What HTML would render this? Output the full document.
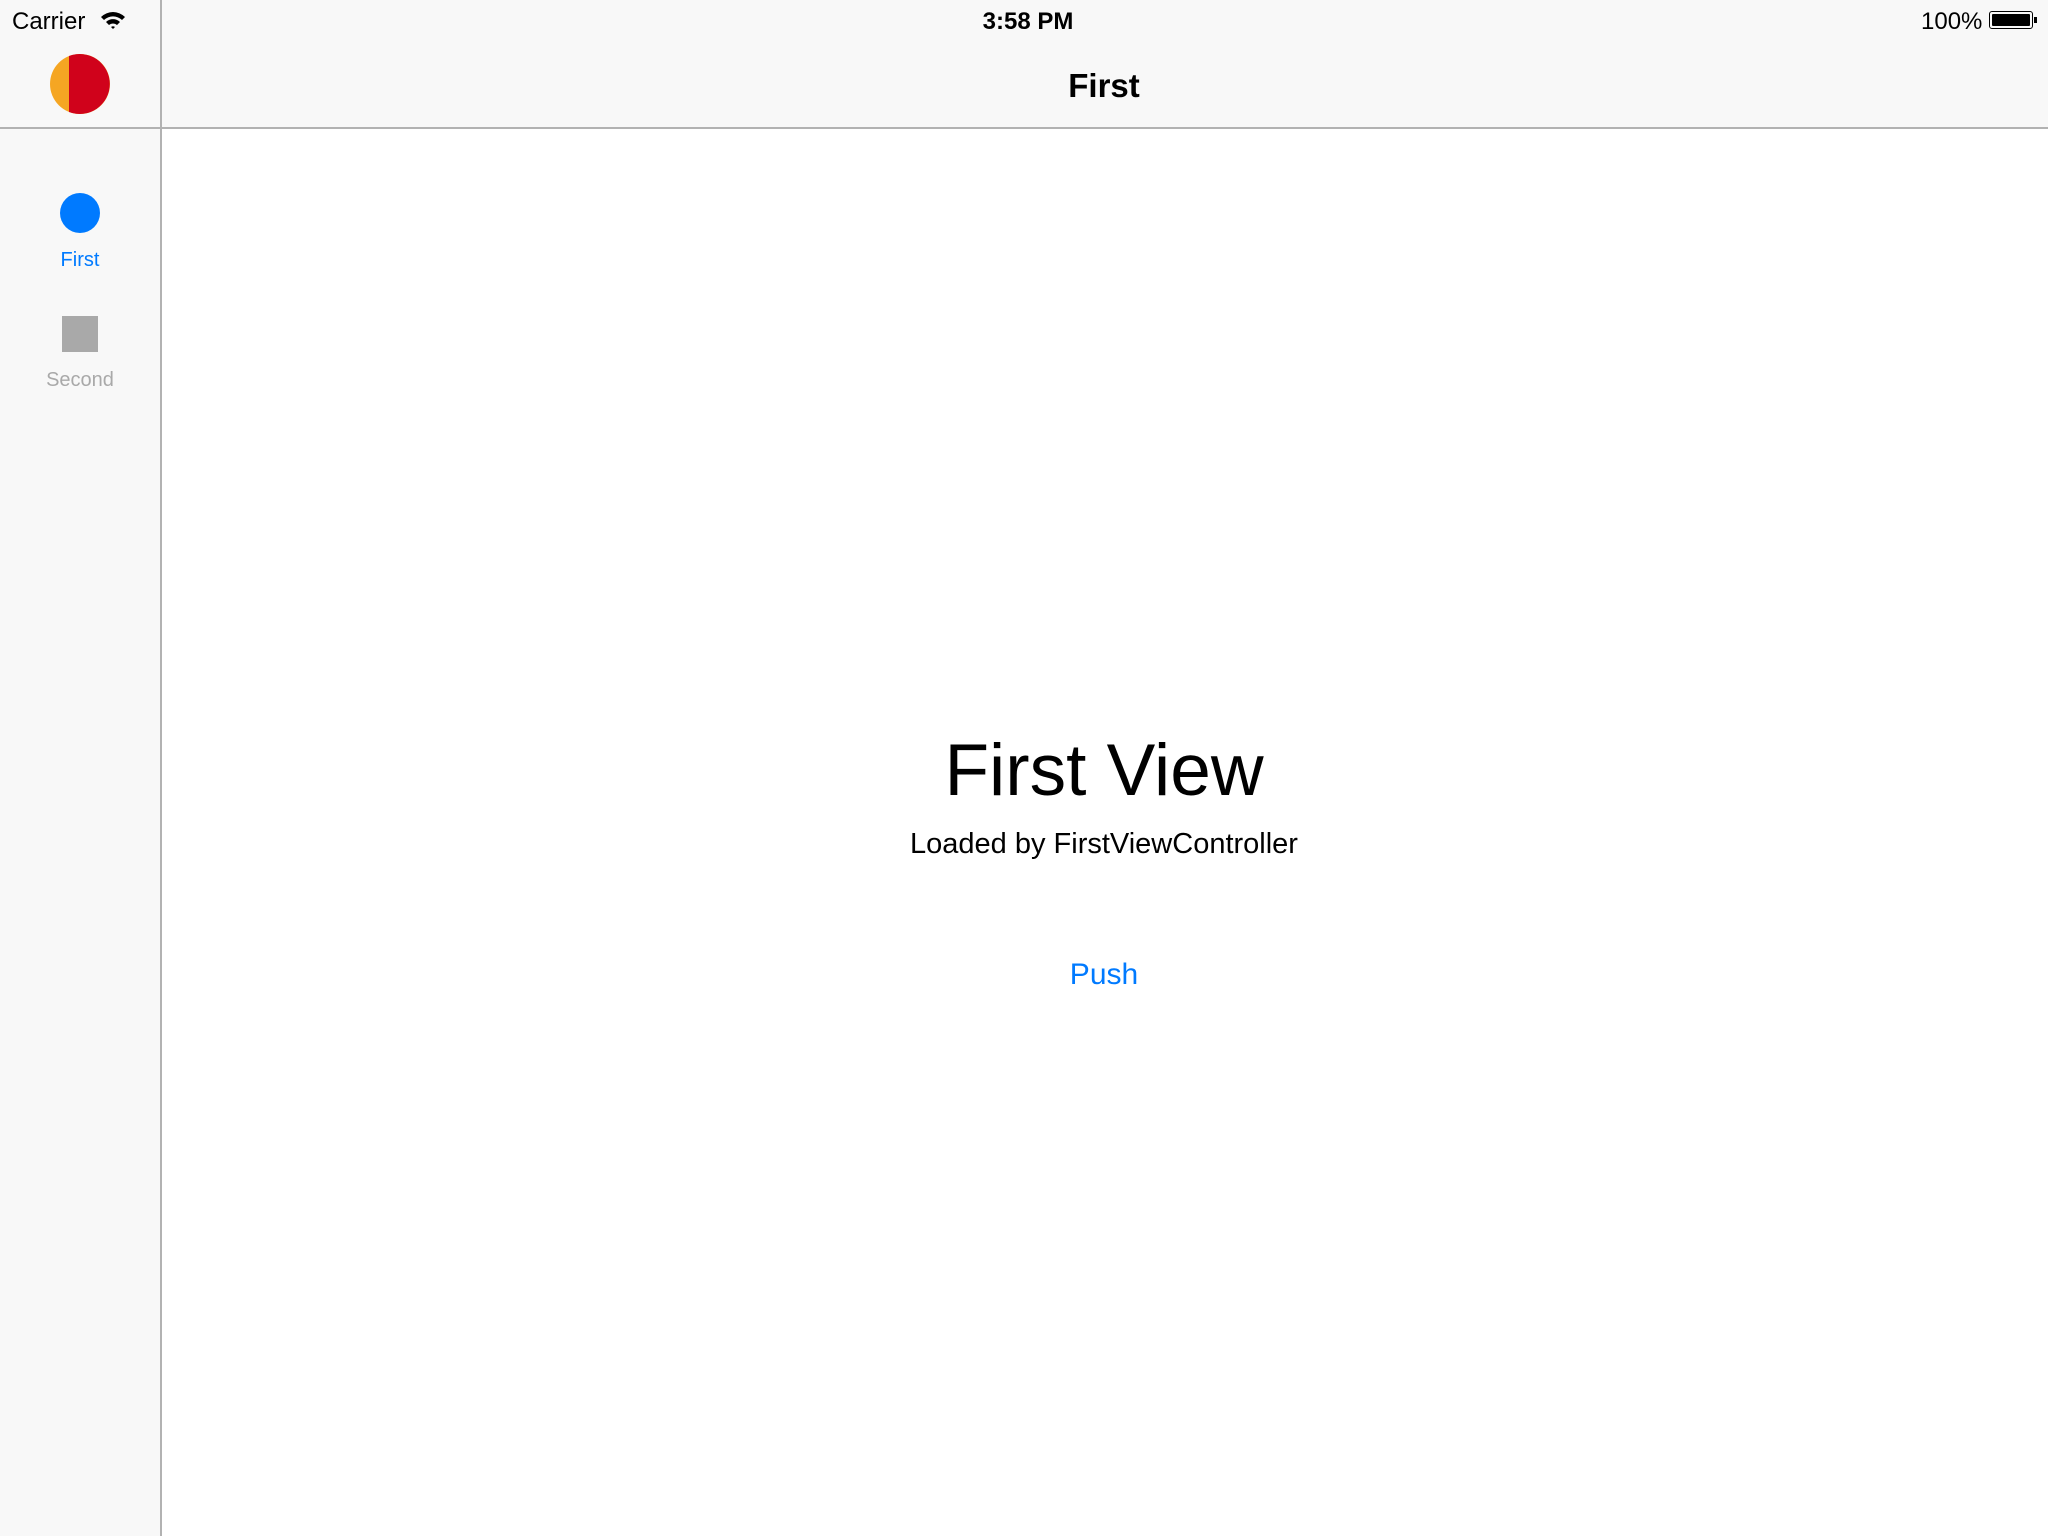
<!DOCTYPE html>
<html><head><style>
*{margin:0;padding:0}
body{width:2048px;height:1536px;background:#fff;position:relative;overflow:hidden;font-family:"Liberation Sans",sans-serif}
.a{position:absolute;white-space:nowrap}
.c{transform:translateX(-50%)}
</style></head><body>
<div class="a" style="left:0;top:0;width:2048px;height:129px;background:#f8f8f8;border-bottom:2px solid #b2b2b2;box-sizing:border-box"></div>
<div class="a" style="left:0;top:129px;width:160px;height:1407px;background:#f8f8f8"></div>
<div class="a" style="left:160px;top:0;width:2px;height:1536px;background:#b2b2b2"></div>
<div class="a" style="left:12px;top:8px;font-size:24px;color:#000">Carrier</div>
<svg class="a" style="left:100px;top:10px" width="26" height="20" viewBox="0 0 26 20"><path d="M1 7 A17 17 0 0 1 25 7 L22 10 A13 13 0 0 0 4 10Z M6 12 A10 10 0 0 1 20 12 L17 15 A6 6 0 0 0 9 15Z M11 17 A3 3 0 0 1 15 17 L13 19Z" fill="#000"/></svg>
<div class="a c" style="left:1028px;top:8px;font-size:24px;font-weight:bold">3:58 PM</div>
<div class="a" style="left:1921px;top:8px;font-size:24px">100%</div>
<div class="a" style="left:1989px;top:11px;width:44px;height:18px;border:1px solid #000;border-radius:3px;box-sizing:border-box;padding:2px"><div style="width:100%;height:100%;background:#000;border-radius:1px"></div></div>
<div class="a" style="left:2034px;top:17px;width:3px;height:6px;background:#000"></div>
<svg class="a" style="left:50px;top:54px" width="60" height="60"><circle cx="30" cy="30" r="30" fill="#f5a623"/><path d="M19 2 A30 30 0 1 1 19 58Z" fill="#d0021b"/></svg>
<div class="a c" style="left:1104px;top:67px;font-size:33px;font-weight:bold">First</div>
<div class="a" style="left:60px;top:193px;width:40px;height:40px;border-radius:50%;background:#007aff"></div>
<div class="a c" style="left:80px;top:249px;font-size:20px;color:#007aff">First</div>
<div class="a" style="left:62px;top:316px;width:36px;height:36px;background:#a9a9a9"></div>
<div class="a c" style="left:80px;top:369px;font-size:20px;color:#a9a9a9">Second</div>
<div class="a c" style="left:1104px;top:729px;font-size:73px">First View</div>
<div class="a c" style="left:1104px;top:828px;font-size:29px">Loaded by FirstViewController</div>
<div class="a c" style="left:1104px;top:958px;font-size:30px;color:#007aff">Push</div>
</body></html>
